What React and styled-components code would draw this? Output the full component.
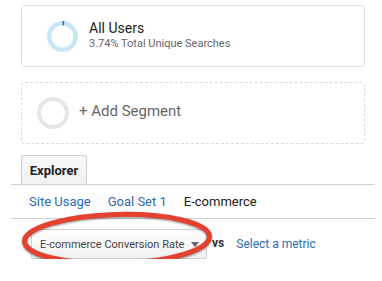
import React from "react";
import styled, { createGlobalStyle } from "styled-components";

const GlobalStyle = createGlobalStyle`
  body {
    margin: 0;
    background: #fff;
    font-family: Roboto, "Liberation Sans", Arial, sans-serif;
  }
`;

const Donut = ({ percent, size = 30, stroke = 4, track, fill }) => {
  const r = (size - stroke) / 2;
  const c = 2 * Math.PI * r;
  return (
    <svg width={size} height={size} viewBox={`0 0 ${size} ${size}`}>
      <circle cx={size / 2} cy={size / 2} r={r} fill="none" stroke={track} strokeWidth={stroke} />
      {percent > 0 && (
        <circle
          cx={size / 2}
          cy={size / 2}
          r={r}
          fill="none"
          stroke={fill}
          strokeWidth={stroke}
          strokeDasharray={`${(c * percent) / 100} ${c}`}
          transform={`rotate(-90 ${size / 2} ${size / 2})`}
        />
      )}
    </svg>
  );
};

const App = () => {
  return (
    <>
      <GlobalStyle />
      <Page>
        <Segments>
          <SegmentCard>
            <Donut percent={2} size={31} stroke={4.5} track="#c8e6f7" fill="#1f74c9" />
            <SegmentText>
              <SegmentTitle>All Users</SegmentTitle>
              <SegmentSub>3.74% Total Unique Searches</SegmentSub>
            </SegmentText>
          </SegmentCard>
          <AddCard>
            <Donut percent={0} size={32} stroke={4} track="#e6e6e6" />
            <AddLabel>+ Add Segment</AddLabel>
          </AddCard>
        </Segments>

        <TabStrip>
          <Tab>Explorer</Tab>
        </TabStrip>

        <SubNav>
          <SubLink>Site Usage</SubLink>
          <SubLink>Goal Set 1</SubLink>
          <SubLink $active>E-commerce</SubLink>
        </SubNav>

        <MetricRow>
          <SelectWrap>
            <Select>
              <span>E-commerce Conversion Rate</span>
              <Caret />
            </Select>
            <Circle width="200" height="58" viewBox="0 0 200 58">
              <ellipse
                cx="97"
                cy="25"
                rx="92.5"
                ry="24.5"
                fill="none"
                stroke="#e5412f"
                strokeWidth="5"
                transform="rotate(-1.5 97 25)"
              />
            </Circle>
          </SelectWrap>
          <Vs>vs</Vs>
          <MetricLink>Select a metric</MetricLink>
        </MetricRow>
      </Page>
    </>
  );
};

const Page = styled.div`
  padding: 5px 7px 0 11px;
`;

const Segments = styled.div`
  display: flex;
  flex-direction: column;
  gap: 15px;
  padding: 0 10px;
`;

const SegmentCard = styled.div`
  height: 60px;
  border: 1px solid #e0e0e0;
  border-radius: 4px;
  display: flex;
  align-items: center;
  gap: 11px;
  padding-left: 25px;
`;

const SegmentText = styled.div`
  display: flex;
  flex-direction: column;
  margin-top: -2px;
`;

const SegmentTitle = styled.div`
  font-size: 14px;
  color: #222;
  line-height: 17px;
`;

const SegmentSub = styled.div`
  font-size: 11px;
  color: #666;
  line-height: 13px;
`;

const AddCard = styled.div`
  height: 60px;
  border: 1px dashed #dcdcdc;
  border-radius: 4px;
  display: flex;
  align-items: center;
  gap: 10px;
  padding-left: 15px;
`;

const AddLabel = styled.div`
  font-size: 15px;
  color: #666;
  margin-top: -4px;
`;

const TabStrip = styled.div`
  margin-top: 11px;
  padding-left: 10px;
  border-bottom: 1px solid #cfcfcf;
  display: flex;
`;

const Tab = styled.div`
  width: 64px;
  height: 28px;
  border: 1px solid #d0d0d0;
  border-bottom: none;
  border-radius: 3px 3px 0 0;
  background: linear-gradient(#fafafa, #f0f0f0);
  font-size: 13px;
  font-weight: 700;
  color: #222;
  display: flex;
  align-items: center;
  justify-content: center;
`;

const SubNav = styled.div`
  height: 33px;
  display: flex;
  align-items: center;
  gap: 17px;
  padding-left: 18px;
  border-bottom: 1px solid #cfcfcf;
`;

const SubLink = styled.div`
  font-size: 13px;
  color: ${({ $active }) => ($active ? "#222" : "#2a6db5")};
  margin-top: -1px;
`;

const MetricRow = styled.div`
  display: flex;
  align-items: center;
  padding: 10px 0 0 20px;
`;

const SelectWrap = styled.div`
  position: relative;
  flex-shrink: 0;
`;

const Select = styled.div`
  width: 176px;
  height: 30px;
  box-sizing: border-box;
  border: 1px solid #d0d0d0;
  border-radius: 2px;
  background: linear-gradient(#ffffff, #f1f1f1);
  display: flex;
  align-items: center;
  justify-content: space-between;
  padding: 0 7px 0 8px;
  font-size: 11px;
  white-space: nowrap;
  color: #444;
`;

const Caret = styled.span`
  width: 0;
  height: 0;
  border-left: 4px solid transparent;
  border-right: 4px solid transparent;
  border-top: 5px solid #666;
`;

const Circle = styled.svg`
  position: absolute;
  left: -11px;
  top: -15px;
  overflow: visible;
  filter: drop-shadow(0 1.5px 1px rgba(0, 0, 0, 0.45));
  pointer-events: none;
`;

const Vs = styled.div`
  margin-left: 5px;
  margin-top: -3px;
  font-size: 12px;
  font-weight: 700;
  color: #333;
`;

const MetricLink = styled.div`
  margin-left: 12px;
  font-size: 12px;
  color: #2a6db5;
`;

export default App;
